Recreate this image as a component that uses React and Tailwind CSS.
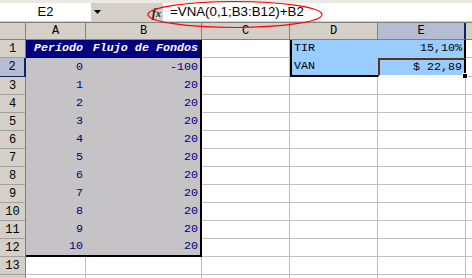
const MONO = "font-['Liberation_Mono','Courier_New',monospace]"

const DATA = [
  [0, -100],
  [1, 20],
  [2, 20],
  [3, 20],
  [4, 20],
  [5, 20],
  [6, 20],
  [7, 20],
  [8, 20],
  [9, 20],
  [10, 20],
]

const COLS = ['A', 'B', 'C', 'D', 'E']

function RowHead({ n, selected }) {
  return (
    <div
      className={`flex items-center justify-center text-[12px] text-black border-b ${MONO} ${
        selected
          ? 'bg-[#b6bdd2] border-r-2 border-r-[#0a246a] border-b-[#0a246a]'
          : 'bg-[#d4d0c8] border-r border-r-[#808080] border-b-[#a0a0a0]'
      }`}
    >
      {n}
    </div>
  )
}

function Blank({ last }) {
  return <div className={`border-b border-[#c0c0c0] ${last ? '' : 'border-r'}`} />
}

function FormulaBar() {
  return (
    <div className="h-[23px] flex flex-col bg-[#d4d0c8] border-b border-[#808080]">
      <div className="h-[3px] bg-[#ece9e4]" />
      <div className="flex h-[18px]">
        <div className="w-[91px] bg-white flex items-center justify-center font-['Liberation_Sans',Arial,sans-serif] text-[13px] text-black">
          E2
        </div>
        <div className="w-[12px] flex items-center justify-center">
          <svg width="7" height="4" viewBox="0 0 7 4">
            <path d="M0 0h7L3.5 4z" fill="#000" />
          </svg>
        </div>
        <div className="w-[60px] flex items-center justify-end pr-[2px]">
          <span className="font-['Liberation_Serif',serif] italic font-bold text-[13px] leading-none text-[#222]">
            f<span className="text-[10px]">x</span>
          </span>
        </div>
        <div className="flex-1 bg-white flex items-center pl-[7px] font-['Liberation_Sans',Arial,sans-serif] text-[13.3px] text-black">
          =VNA(0,1;B3:B12)+B2
        </div>
      </div>
    </div>
  )
}

export default function App() {
  return (
    <div className="relative w-[472px] h-[278px] overflow-hidden bg-white">
      <FormulaBar />

      <div className="grid grid-cols-[26px_60px_116px_88px_88px_88px_6px] grid-rows-[17px_18px_19px_repeat(12,18px)]">
        {/* column headers */}
        <div className="bg-[#d4d0c8] border-r border-b border-[#808080]" />
        {COLS.map((c) => (
          <div
            key={c}
            className={`flex items-center justify-center text-[12px] text-black border-b border-b-[#808080] ${MONO} ${
              c === 'E'
                ? 'bg-[#b6bdd2] border-r-2 border-r-[#0a246a]'
                : 'bg-[#d4d0c8] border-r border-r-[#808080]'
            }`}
          >
            {c}
          </div>
        ))}
        <div className="bg-[#d4d0c8] border-b border-[#808080]" />

        {/* row 1 */}
        <RowHead n={1} />
        <div className={`bg-[#000080] border-b border-black flex items-center justify-end pr-[3px] text-white font-bold italic text-[11.7px] ${MONO}`}>
          Período
        </div>
        <div className={`bg-[#000080] border-b border-black border-r-2 border-r-black flex items-center justify-end pr-[2px] text-white font-bold italic text-[11.7px] ${MONO}`}>
          Flujo de Fondos
        </div>
        <Blank />
        <div className={`bg-[#99ccff] border-l-2 border-black flex items-center pl-[2px] text-black text-[11.7px] ${MONO}`}>
          TIR
        </div>
        <div className={`bg-[#99ccff] border-r-2 border-black flex items-center justify-end pr-[2px] text-black text-[11.7px] ${MONO}`}>
          15,10%
        </div>
        <Blank last />

        {DATA.map(([p, f], i) => {
          const row = i + 2
          const last = row === 12
          return [
            <RowHead key={`h${row}`} n={row} selected={row === 2} />,
            <div
              key={`a${row}`}
              className={`bg-[#c6c3c6] flex items-center justify-end pr-[3px] text-[#000080] text-[11.7px] ${MONO} ${
                last ? 'border-b-2 border-black' : ''
              }`}
            >
              {p}
            </div>,
            <div
              key={`b${row}`}
              className={`bg-[#c6c3c6] border-r-2 border-black flex items-center justify-end pr-[2px] text-[#000080] text-[11.7px] ${MONO} ${
                last ? 'border-b-2' : ''
              }`}
            >
              {f}
            </div>,
            <Blank key={`c${row}`} />,
            row === 2 ? (
              <div key="d2" className={`bg-[#99ccff] border-l-2 border-b-2 border-black flex items-center pl-[2px] text-black text-[11.7px] ${MONO}`}>
                VAN
              </div>
            ) : (
              <Blank key={`d${row}`} />
            ),
            row === 2 ? (
              <div
                key="e2"
                className={`relative bg-[#99ccff] border-t-2 border-l-2 border-t-[#603010] border-l-[#603010] border-r-2 border-r-black border-b-2 border-b-white flex items-center justify-end pr-[2px] text-black text-[11.7px] ${MONO}`}
              >
                $ 22,89
                <div className="absolute right-[-4px] bottom-[-4px] w-[6px] h-[6px] bg-black border border-white" />
              </div>
            ) : (
              <Blank key={`e${row}`} />
            ),
            <Blank key={`x${row}`} last />,
          ]
        })}

        {[13, 14].map((row) => [
          <RowHead key={`h${row}`} n={row === 13 ? row : ''} />,
          <Blank key={`a${row}`} />,
          <Blank key={`b${row}`} />,
          <Blank key={`c${row}`} />,
          <Blank key={`d${row}`} />,
          <Blank key={`e${row}`} />,
          <Blank key={`x${row}`} last />,
        ])}
      </div>

      {/* red annotation ellipse */}
      <svg className="absolute left-0 top-0 pointer-events-none" width="472" height="40">
        <ellipse cx="235" cy="14.5" rx="87" ry="13" fill="none" stroke="#ff0000" strokeWidth="1.2" />
      </svg>
    </div>
  )
}
